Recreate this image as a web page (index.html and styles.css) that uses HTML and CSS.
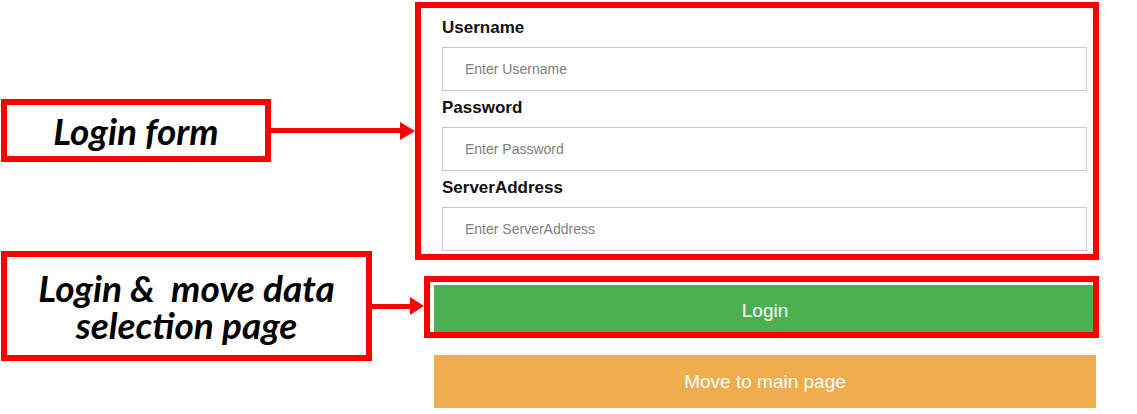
FILE: index.html
```html
<!DOCTYPE html>
<html lang="en">
<head>
<meta charset="utf-8">
<title>Login</title>
<link rel="stylesheet" href="styles.css">
</head>
<body>
<div class="page">
  <div class="row row-form">
    <div class="note-slot note-slot-form">
      <div class="note note-form"><span>Login form</span></div>
      <div class="arrow"></div>
    </div>
    <form class="form-box">
      <label class="field-label">Username</label>
      <input class="field-input" type="text" placeholder="Enter Username">
      <label class="field-label">Password</label>
      <input class="field-input" type="password" placeholder="Enter Password">
      <label class="field-label">ServerAddress</label>
      <input class="field-input" type="text" placeholder="Enter ServerAddress">
    </form>
  </div>
  <div class="row row-login">
    <div class="note-slot note-slot-login">
      <div class="note note-login"><span>Login &amp;&nbsp; move data<br>selection page</span></div>
      <div class="arrow arrow-short"></div>
    </div>
    <div class="btn-wrap">
      <button class="btn btn-login" type="button">Login</button>
      <div class="highlight"></div>
    </div>
  </div>
  <div class="row row-main">
    <button class="btn btn-main" type="button">Move to main page</button>
  </div>
</div>
</body>
</html>
```

FILE: styles.css
```css
body {
  margin: 0;
  background: #fff;
  font-family: "Liberation Sans", Arial, sans-serif;
}

.page {
  padding: 2px 0 0 1px;
}

.row-form {
  display: flex;
  align-items: center;
}

.note-slot {
  display: flex;
  align-items: center;
}

.note-slot-form {
  width: 414px;
  margin-top: -1px;
}

.note {
  box-sizing: border-box;
  border: 6px solid #ff0000;
  background: #fff;
  display: flex;
  align-items: center;
  justify-content: center;
  text-align: center;
  font-family: Lato, "Open Sans", sans-serif;
  font-weight: 700;
  font-style: italic;
  color: #000;
  flex-shrink: 0;
}

.note-form {
  width: 270px;
  height: 63px;
  font-size: 37px;
  line-height: 42px;
}

.note-login {
  width: 371px;
  height: 110px;
  font-size: 37px;
  line-height: 37px;
  white-space: nowrap;
}

.arrow {
  flex: 1;
  height: 5px;
  background: #ff0000;
  position: relative;
  margin-right: 15px;
}

.arrow::after {
  content: "";
  position: absolute;
  right: -15px;
  top: 50%;
  transform: translateY(-50%);
  border-left: 15px solid #ff0000;
  border-top: 9px solid transparent;
  border-bottom: 9px solid transparent;
}

.arrow-short {
  margin-right: 14px;
}

.arrow-short::after {
  right: -14px;
  border-left-width: 14px;
}

.form-box {
  width: 684px;
  box-sizing: border-box;
  margin: 0;
  border: 6px solid #ff0000;
  padding: 10px 6px 3px 21px;
  display: flex;
  flex-direction: column;
}

.field-label {
  font-size: 17px;
  line-height: 20px;
  font-weight: 700;
  color: #111;
  margin-bottom: 9px;
}

.field-input {
  box-sizing: border-box;
  height: 44px;
  margin: 0 0 7px;
  border: 1px solid #ccc;
  padding: 0 22px;
  font-family: "Liberation Sans", Arial, sans-serif;
  font-size: 14px;
  color: #333;
  background: #fff;
}

.field-input:last-child {
  margin-bottom: 0;
}

.field-input::placeholder {
  color: #808080;
}

.row-login {
  display: flex;
  align-items: flex-start;
  margin-top: 25px;
}

.note-slot-login {
  width: 423px;
  margin: -34px 0 -24px;
}

.btn-wrap {
  position: relative;
  margin-left: 10px;
  width: 662px;
}

.btn {
  display: block;
  width: 100%;
  height: 52px;
  border: 0;
  padding: 0;
  color: #fff;
  font-family: "Liberation Sans", Arial, sans-serif;
  font-size: 19px;
}

.btn-login {
  background: #4caf50;
}

.highlight {
  position: absolute;
  top: -9px;
  left: -10px;
  right: -3px;
  bottom: -1px;
  border: 6px solid #ff0000;
}

.row-main {
  margin-top: 18px;
  padding-left: 433px;
}

.btn-main {
  width: 662px;
  height: 53px;
  background: #f0ad4e;
}
```
